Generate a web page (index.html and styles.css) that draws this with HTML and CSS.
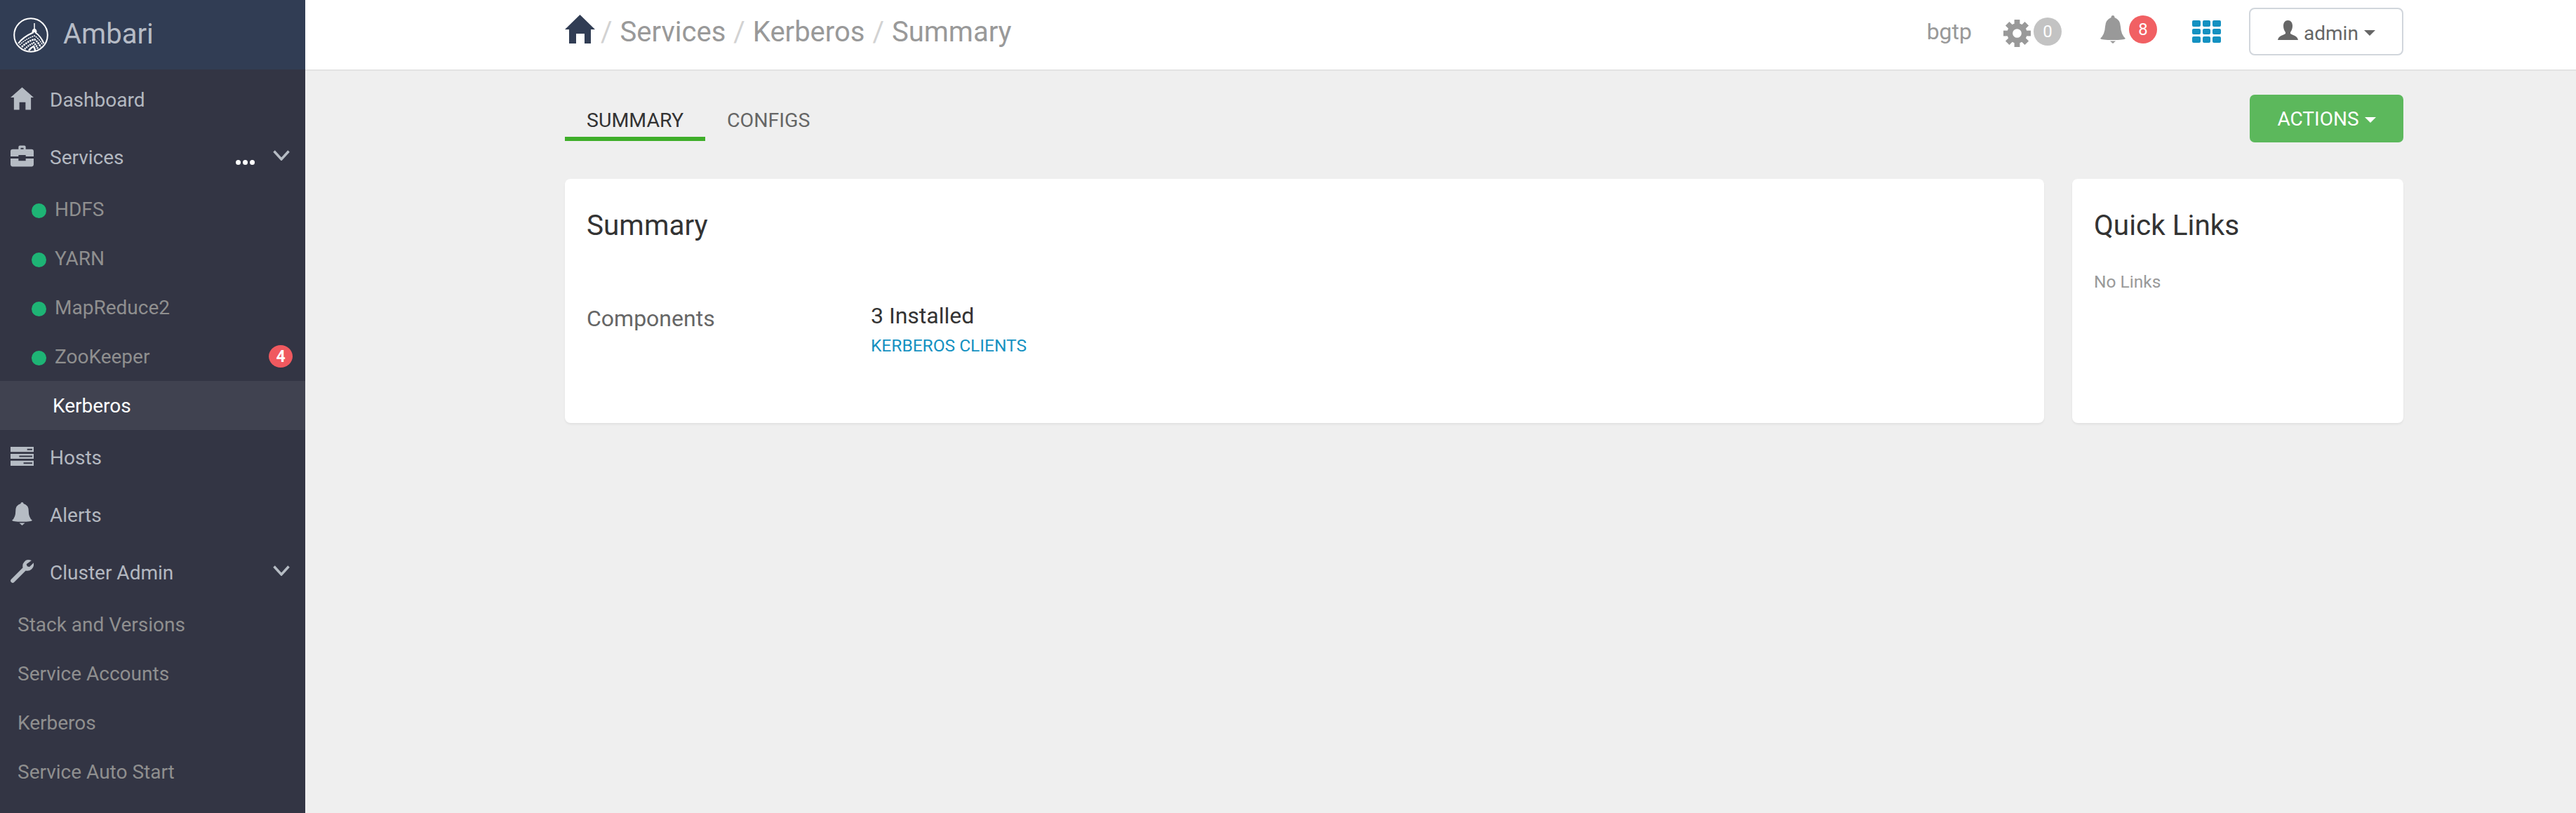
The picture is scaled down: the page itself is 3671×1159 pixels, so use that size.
FILE: index.html
```html
<!DOCTYPE html>
<html lang="en">
<head>
    <meta charset="UTF-8">
    <title>Ambari - Kerberos Summary</title>
    <link rel="stylesheet" href="styles.css">
</head>
<body>

    <aside class="sidebar">
        <div class="brand">
            <svg class="logo" viewBox="0 0 50 50" fill="none" stroke="#fff">
                <circle cx="25" cy="25" r="23.800" stroke-width="2"/>
                <path d="M30 8v9" stroke-width="1.500"/>
                <path d="M26.500 21c0-3 1-5 3.500-5s3.500 2 3.500 5z" fill="#fff" stroke="none"/>
                <path d="M29 21C20 25 12 30 7 37M31 21C37 25 41 31 43.500 37" stroke-width="2"/>
                <path d="M9 39C15 33 22 29 30 26 35 29 39 34 41.500 39" stroke-width="1.500" stroke-dasharray="2 1"/>
                <path d="M12 42C17 37 23 33 30 31 34 34 37 38 39 42" stroke-width="2.500" stroke-dasharray="2.500 1"/>
                <path d="M16 45C20 41 25 38 29 36 32 38 34 42 35 45" stroke-width="2.500" stroke-dasharray="2 1"/>
                <path d="M22 47C24 44 27 42 29 41 30 43 31 45 31 47" stroke-width="2.500"/>
            </svg>
            <span class="brand-name">Ambari</span>
        </div>

        <nav class="nav">
            <a class="nav-item">
                <svg class="nav-icon" viewBox="0 0 34 33" fill="#b6bcc4"><path d="M17 0 34 15H30V33H22V22H13V33H5V15H0z"/></svg>
                Dashboard
            </a>
            <a class="nav-item">
                <svg class="nav-icon" viewBox="0 0 32 29" fill="#b6bcc4"><path d="M11 5V2q0-2 2-2h6q2 0 2 2v3h8q3 0 3 3v7H21v-2H11v2H0V8q0-3 3-3zm3 0h4V3h-4zM0 18h11v3h10v-3h11v8q0 3-3 3H3q-3 0-3-3z"/></svg>
                Services
                <span class="more-dots"><i></i><i></i><i></i></span>
                <svg class="chevron" viewBox="0 0 24 15" fill="none" stroke="#b6bcc4" stroke-width="3.500"><path d="M1.500 1.500 12 13 22.500 1.500"/></svg>
            </a>

            <ul class="sub-list services-list">
                <li class="sub-item"><span class="dot"></span>HDFS</li>
                <li class="sub-item"><span class="dot"></span>YARN</li>
                <li class="sub-item"><span class="dot"></span>MapReduce2</li>
                <li class="sub-item"><span class="dot"></span>ZooKeeper<span class="count-badge">4</span></li>
                <li class="sub-item active">Kerberos</li>
            </ul>

            <a class="nav-item">
                <svg class="nav-icon" viewBox="0 0 32 26" fill="#b6bcc4" fill-rule="evenodd"><path d="M0 0H32V7H0zM23 2.500V4.500H30V2.500zM0 9.500H32V16.500H0zM12 12V14H30V12zM0 19H32V26H0zM18 21.500V23.500H30V21.500z"/></svg>
                Hosts
            </a>
            <a class="nav-item">
                <svg class="nav-icon bell" viewBox="0 0 28 32" fill="#b6bcc4"><path d="M14 0q2 0 2 2 7 2 7 10 0 9 5 13-1 2-14 2T0 25q5-4 5-13 0-8 7-10 0-2 2-2zM10 28.500h8L14 32z"/></svg>
                Alerts
            </a>
            <a class="nav-item">
                <svg class="nav-icon" viewBox="0 0 32 32" fill="#b6bcc4"><path d="M24 0q3 0 5 1l-7 5 1 3 3 1 6-6q1 6-3 9-3 3-8 2L5 31q-2 2-4 0t0-4L17 11q-1-5 2-8 2-3 5-3z"/></svg>
                Cluster Admin
                <svg class="chevron push" viewBox="0 0 24 15" fill="none" stroke="#b6bcc4" stroke-width="3.500"><path d="M1.500 1.500 12 13 22.500 1.500"/></svg>
            </a>

            <ul class="sub-list admin-list">
                <li class="sub-item">Stack and Versions</li>
                <li class="sub-item">Service Accounts</li>
                <li class="sub-item">Kerberos</li>
                <li class="sub-item">Service Auto Start</li>
            </ul>
        </nav>
    </aside>

    <div class="main">
        <header class="topbar">
            <div class="breadcrumb">
                <svg class="crumb-home" viewBox="0 0 43 41" fill="#313d54"><path d="M21.500 0 43 21H37V41H28V27H16V41H6V21H0z"/></svg>
                <span class="sep">/</span><span>Services</span>
                <span class="sep">/</span><span>Kerberos</span>
                <span class="sep">/</span><span>Summary</span>
            </div>
            <div class="top-right">
                <span class="cluster-name">bgtp</span>
                <div class="top-group gear-group">
                    <svg class="gear" viewBox="0 0 40 40">
                        <circle cx="20" cy="20" r="10.500" fill="none" stroke="#999" stroke-width="8"/>
                        <g fill="#999">
                            <rect x="16" y="0" width="8" height="8"/>
                            <rect x="16" y="32" width="8" height="8"/>
                            <rect x="0" y="16" width="8" height="8"/>
                            <rect x="32" y="16" width="8" height="8"/>
                            <rect x="16" y="0" width="8" height="8" transform="rotate(45 20 20)"/>
                            <rect x="16" y="0" width="8" height="8" transform="rotate(135 20 20)"/>
                            <rect x="16" y="0" width="8" height="8" transform="rotate(225 20 20)"/>
                            <rect x="16" y="0" width="8" height="8" transform="rotate(315 20 20)"/>
                        </g>
                    </svg>
                    <span class="top-badge grey">0</span>
                </div>
                <div class="top-group bell-group">
                    <svg class="top-bell" viewBox="0 0 36 40" fill="#999"><path d="M18 0q2.500 0 2.500 3 8 3 8.500 13 .5 11 7 17-2 2-18 2T0 33q6.500-6 7-17 .5-10 8.500-13 0-3 2.500-3zM14 36.500h8L18 40z"/></svg>
                    <span class="top-badge red">8</span>
                </div>
                <div class="apps-grid">
                    <i></i><i></i><i></i><i></i><i></i><i></i><i></i><i></i><i></i>
                </div>
                <button class="user-btn">
                    <svg class="user-icon" viewBox="0 0 29 28" fill="#666"><path d="M14.500 0c4 0 6.500 3 6.500 8 0 4-1.500 7-3 9v2c3 2 10 3 11 9H0c1-6 8-7 11-9v-2c-1.500-2-3-5-3-9 0-5 2.500-8 6.500-8z"/></svg>
                    <span class="user-name">admin</span>
                    <span class="caret"></span>
                </button>
            </div>
        </header>

        <div class="content">
            <div class="tab-row">
                <ul class="tabs">
                    <li class="tab active">SUMMARY</li>
                    <li class="tab">CONFIGS</li>
                </ul>
                <button class="actions-btn">ACTIONS<span class="caret"></span></button>
            </div>

            <div class="cards">
                <section class="card summary-card">
                    <h2>Summary</h2>
                    <div class="summary-row">
                        <div class="row-label">Components</div>
                        <div>
                            <div class="row-value">3 Installed</div>
                            <a class="row-link">KERBEROS CLIENTS</a>
                        </div>
                    </div>
                </section>
                <section class="card links-card">
                    <h2>Quick Links</h2>
                    <p class="no-links">No Links</p>
                </section>
            </div>
        </div>
    </div>

</body>
</html>
```

FILE: styles.css
```css
* {
    box-sizing: border-box;
}
body {
    font-family: Roboto, Arial, sans-serif;
    background-color: #efefef;
    display: flex;
    height: 100vh;
    margin: 0;
    overflow: hidden;
}
ul {
    list-style: none;
    margin: 0;
    padding: 0;
}
button {
    font-family: inherit;
    cursor: pointer;
}

/* sidebar */
.sidebar {
    width: 435px;
    flex-shrink: 0;
    background-color: #333544;
}
.brand {
    height: 99px;
    background-color: #313d54;
    display: flex;
    align-items: center;
    padding-left: 19px;
}
.logo {
    width: 50px;
    height: 50px;
}
.brand-name {
    font-size: 40px;
    color: #b6bcc6;
    margin: -3px 0 0 21px;
}
.nav {
    padding-top: 2px;
}
.nav-item {
    height: 82px;
    display: flex;
    align-items: center;
    padding-left: 15px;
    font-size: 28px;
    color: #b3b8c0;
}
.nav-icon {
    width: 33px;
    height: 33px;
    margin-right: 23px;
    margin-top: -4px;
}
.more-dots {
    display: flex;
    gap: 3px;
    margin-left: auto;
    margin-top: 14px;
}
.more-dots i {
    width: 7px;
    height: 7px;
    border-radius: 50%;
    background-color: #fff;
}
.chevron {
    width: 24px;
    height: 15px;
    margin: -6px 22px 0 26px;
}
.chevron.push {
    margin-left: auto;
}
.sub-list {
    margin-top: -2px;
}
.services-list {
    margin-bottom: -2px;
}
.sub-item {
    height: 70px;
    display: flex;
    align-items: center;
    padding: 0 18px 0 45px;
    font-size: 28px;
    color: #8f8f8f;
}
.sub-item.active {
    background-color: #404250;
    color: #fff;
    padding-left: 75px;
}
.dot {
    width: 21px;
    height: 21px;
    border-radius: 50%;
    background-color: #1eb475;
    margin-right: 12px;
    margin-top: 4px;
}
.count-badge {
    width: 34px;
    height: 32px;
    margin-left: auto;
    border-radius: 50%;
    background-color: #f0595f;
    color: #fff;
    font-size: 23px;
    font-weight: 700;
    display: flex;
    align-items: center;
    justify-content: center;
}
.admin-list .sub-item {
    padding-left: 25px;
}

/* top bar */
.main {
    flex: 1;
    min-width: 0;
}
.topbar {
    height: 101px;
    background-color: #fff;
    border-bottom: 2px solid #e3e3e3;
    display: flex;
    justify-content: space-between;
    padding: 0 246px 0 370px;
}
.breadcrumb {
    display: flex;
    align-items: center;
    font-size: 40px;
    color: #999;
    height: 90px;
}
.crumb-home {
    width: 43px;
    height: 41px;
    margin: -8px -3px 0 0;
}
.sep {
    color: #d2d2d2;
    margin: 0 11px;
}
.top-right {
    display: flex;
    align-items: center;
    height: 90px;
}
.cluster-name {
    font-size: 32px;
    color: #999;
    margin-right: 45px;
}
.top-group {
    display: flex;
    align-items: center;
}
.gear {
    width: 39px;
    height: 39px;
    margin-right: 4px;
    margin-top: 4px;
}
.top-bell {
    width: 36px;
    height: 40px;
    margin-right: 5px;
}
.top-badge {
    width: 40px;
    height: 40px;
    border-radius: 50%;
    color: #fff;
    font-size: 24px;
    display: flex;
    align-items: center;
    justify-content: center;
}
.top-badge.grey {
    background-color: #c3c3c3;
}
.top-badge.red {
    background-color: #f16063;
}
.gear-group {
    margin-right: 55px;
}
.bell-group {
    margin: -6px 50px 0 0;
}
.apps-grid {
    width: 41px;
    height: 32px;
    display: grid;
    grid-template-columns: repeat(3, 1fr);
    grid-template-rows: repeat(3, 1fr);
    gap: 3px;
    margin-right: 40px;
}
.apps-grid i {
    background-color: #1491c1;
    border-radius: 2px;
}
.user-btn {
    width: 220px;
    height: 68px;
    background-color: #fff;
    border: 2px solid #d1d6dc;
    border-radius: 8px;
    color: #666;
    font-size: 28px;
    display: flex;
    align-items: center;
    padding: 0 0 0 39px;
}
.user-name {
    margin-top: 4px;
}
.user-icon {
    width: 29px;
    height: 28px;
    margin-right: 8px;
    margin-top: -4px;
}
.caret {
    display: inline-block;
    border-top: 8px solid currentColor;
    border-left: 8px solid transparent;
    border-right: 8px solid transparent;
    margin-left: 8px;
    margin-top: 4px;
}

/* content */
.content {
    padding: 34px 246px 0 370px;
}
.tab-row {
    display: flex;
    justify-content: space-between;
    align-items: flex-start;
}
.tabs {
    display: flex;
    padding-top: 14px;
}
.tab {
    font-size: 28.500px;
    height: 52px;
    padding: 6px 31px 0;
    color: #666;
}
.tab.active {
    color: #333;
    border-bottom: 6px solid #3fae2a;
}
.actions-btn {
    width: 219px;
    height: 68px;
    border: none;
    border-radius: 7px;
    background-color: #5cb85c;
    color: #fff;
    font-size: 28px;
    display: flex;
    align-items: center;
    justify-content: center;
}
.cards {
    display: flex;
    gap: 40px;
    margin-top: 52px;
}
.card {
    height: 348px;
    background-color: #fff;
    border-radius: 8px;
    box-shadow: 0 2px 3px rgba(0, 0, 0, 0.06);
    padding: 41px 31px 0;
}
.card h2 {
    font-size: 40.500px;
    font-weight: 400;
    line-height: 50px;
    color: #333;
    margin: 0;
}
.summary-card {
    flex: 1;
}
.links-card {
    width: 472px;
}
.summary-row {
    display: flex;
    margin-top: 83px;
}
.row-label {
    width: 405px;
    font-size: 32px;
    line-height: 42px;
    margin-top: 4px;
    color: #666;
}
.row-value {
    font-size: 32px;
    line-height: 42px;
    color: #333;
}
.row-link {
    display: block;
    font-size: 24.500px;
    line-height: 30px;
    margin-top: 7px;
    color: #1491c1;
}
.no-links {
    font-size: 24.500px;
    line-height: 30px;
    color: #999;
    margin: 41px 0 0;
}
```
